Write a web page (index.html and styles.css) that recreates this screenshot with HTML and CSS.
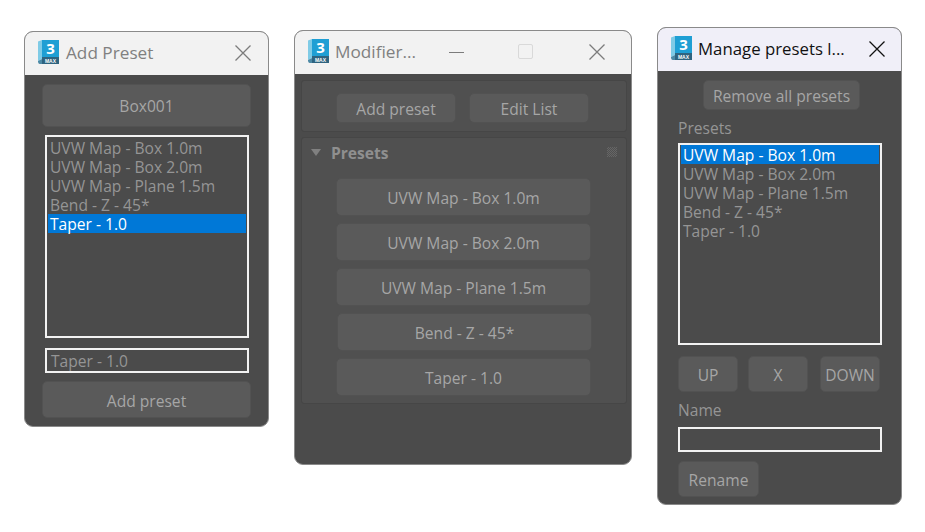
FILE: index.html
```html
<!DOCTYPE html>
<html lang="en">
<head>
<meta charset="utf-8">
<title>Presets</title>
<link rel="stylesheet" href="styles.css">
</head>
<body>
<svg class="defs" width="0" height="0" aria-hidden="true">
  <symbol id="logo" viewBox="0 0 24 26">
    <path d="M2 2.500 6 1v19l-4 2z" fill="#7fcbe6"/>
    <path d="M6 1h17v19H6z" fill="#1f9fd4"/>
    <path d="M6 18h17v7H3l3-3z" fill="#2f6480"/>
    <path d="M2 22l4-2v5H4.500A2.500 2.500 0 0 1 2 22.500z" fill="#4d8aa6"/>
  </symbol>
  <symbol id="close" viewBox="0 0 16 16">
    <path d="M.5.5l15 15M15.500.5l-15 15" fill="none" stroke="currentColor" stroke-width="1.300"/>
  </symbol>
</svg>

<section class="win win-add">
  <header class="bar">
    <span class="logo"><svg width="24" height="26"><use href="#logo"/></svg><b class="l3">3</b><b class="lm">MAX</b></span>
    <span class="title">Add Preset</span>
    <svg class="x" width="16" height="16"><use href="#close"/></svg>
  </header>
  <div class="body add-body">
    <div class="btn btn-box">Box001</div>
    <ul class="list list-add">
      <li>UVW Map - Box 1.0m</li>
      <li>UVW Map - Box 2.0m</li>
      <li>UVW Map - Plane 1.5m</li>
      <li>Bend - Z - 45*</li>
      <li class="sel">Taper - 1.0</li>
    </ul>
    <div class="input input-add">Taper - 1.0</div>
    <div class="btn btn-addp">Add preset</div>
  </div>
</section>

<section class="win win-mod">
  <header class="bar">
    <span class="logo"><svg width="24" height="26"><use href="#logo"/></svg><b class="l3">3</b><b class="lm">MAX</b></span>
    <span class="title title-mod">Modifier...</span>
    <span class="min"></span>
    <span class="max"></span>
    <svg class="x" width="16" height="16"><use href="#close"/></svg>
  </header>
  <div class="body mod-body">
    <div class="group group-top">
      <div class="btn btn-top">Add preset</div>
      <div class="btn btn-top">Edit List</div>
    </div>
    <div class="group group-presets">
      <div class="roll"><span class="tri"></span><span class="roll-name">Presets</span><span class="grip"></span></div>
      <div class="btn btn-p">UVW Map - Box 1.0m</div>
      <div class="btn btn-p">UVW Map - Box 2.0m</div>
      <div class="btn btn-p">UVW Map - Plane 1.5m</div>
      <div class="btn btn-p btn-shift">Bend - Z - 45*</div>
      <div class="btn btn-p">Taper - 1.0</div>
    </div>
  </div>
</section>

<section class="win win-man">
  <header class="bar bar-active">
    <span class="logo"><svg width="24" height="26"><use href="#logo"/></svg><b class="l3">3</b><b class="lm">MAX</b></span>
    <span class="title title-man">Manage presets l...</span>
    <svg class="x" width="16" height="16"><use href="#close"/></svg>
  </header>
  <div class="body man-body">
    <div class="btn btn-remove">Remove all presets</div>
    <div class="label label-p">Presets</div>
    <ul class="list list-man">
      <li class="sel">UVW Map - Box 1.0m</li>
      <li>UVW Map - Box 2.0m</li>
      <li>UVW Map - Plane 1.5m</li>
      <li>Bend - Z - 45*</li>
      <li>Taper - 1.0</li>
    </ul>
    <div class="row3">
      <div class="btn btn-sm">UP</div>
      <div class="btn btn-sm btn-x">X</div>
      <div class="btn btn-sm btn-down">DOWN</div>
    </div>
    <div class="label label-n">Name</div>
    <div class="input input-man"></div>
    <div class="btn btn-rename">Rename</div>
  </div>
</section>
</body>
</html>
```

FILE: styles.css
```css
* { box-sizing: border-box; }
html, body { margin: 0; padding: 0; }
body {
  position: relative;
  width: 925px;
  height: 532px;
  background: #fff;
  font-family: "Open Sans", "Noto Sans", sans-serif;
  overflow: hidden;
}
.defs { position: absolute; }
.win {
  position: absolute;
  display: flex;
  flex-direction: column;
  border: 1px solid #8a8a8a;
  border-radius: 9px;
  overflow: hidden;
  background: #4b4b4b;
}
.win-add { left: 24px; top: 31px; width: 245px; height: 396px; }
.win-mod { left: 294px; top: 30px; width: 338px; height: 435px; }
.win-man { left: 657px; top: 27px; width: 245px; height: 478px; }

.bar {
  position: relative;
  flex: none;
  height: 43px;
  display: flex;
  align-items: center;
  padding-left: 11px;
  background: #f2f2f2;
  color: #808080;
}
.bar-active { background: #f0eff8; color: #111; }
.logo { position: relative; width: 24px; height: 26px; flex: none; margin-top: -4px; }
.logo svg { display: block; }
.l3 {
  position: absolute; left: 6px; right: 1px; top: 1px;
  text-align: center; color: #fff;
  font: 700 15px/17px "Open Sans", sans-serif;
}
.lm {
  position: absolute; left: 6px; right: 1px; top: 19px;
  text-align: center; color: #fff;
  font: 700 5px/6px "Liberation Sans", sans-serif;
}
.title { margin: -2px 0 0 6px; font-size: 17.200px; line-height: 24px; white-space: nowrap; }
.title-mod { margin-left: 5px; }
.title-man { margin-left: 5px; font-size: 16.800px; }
.x { position: absolute; right: 17px; top: 13px; color: #7c7c7c; }
.bar-active .x { color: #111; right: 16px; }
.win-mod .x { right: 26px; }
.min { position: absolute; left: 154px; top: 21px; width: 15px; height: 1px; background: #7c7c7c; }
.max { position: absolute; left: 223px; top: 13px; width: 15px; height: 15px; border: 1px solid #d9d9d9; border-radius: 2px; }

.body { flex: 1; display: flex; flex-direction: column; }

.btn {
  flex: none;
  display: flex;
  align-items: center;
  justify-content: center;
  padding-top: 2px;
  background: #5a5a5a;
  border: 1px solid #525252;
  border-radius: 5px;
  color: #a6a6a6;
  font-size: 15.600px;
  white-space: nowrap;
}
.list {
  flex: none;
  list-style: none;
  margin: 0;
  padding: 1px 1px 2px;
  border: 2px solid #f2f2f2;
  background: #4b4b4b;
  color: #959595;
  font-size: 15.600px;
}
.list li { padding: 2px 0 0 2px; height: 19px; line-height: 17px; white-space: nowrap; }
.list .sel { background: #0078d7; color: #fff; }
.input {
  flex: none;
  border: 2px solid #f2f2f2;
  padding: 2px 0 0 4px;
  color: #959595;
  font-size: 15.600px;
  line-height: 19px;
}
.label { flex: none; color: #959595; font-size: 15.600px; line-height: 20px; }

/* Add preset window */
.add-body { padding: 9px 17px 0; }
.btn-box { width: 209px; height: 43px; padding-top: 1px; }
.list-add { width: 204px; height: 203px; margin: 8px 0 0 3px; }
.input-add { width: 204px; height: 25px; margin: 10px 0 0 3px; }
.btn-addp { width: 209px; height: 37px; margin-top: 8px; }

/* Modifier window */
.mod-body { padding: 6px 4px 0 6px; }
.group {
  flex: none;
  background: #505050;
  border: 1px solid #464646;
  border-radius: 3px;
}
.group-top {
  height: 52px;
  display: flex;
  gap: 13px;
  padding: 12px 0 0 34px;
}
.btn-top { width: 120px; height: 30px; }
.group-presets {
  height: 267px;
  margin-top: 5px;
  display: flex;
  flex-direction: column;
  gap: 7px;
  padding: 0 0 0 34px;
}
.roll {
  position: relative;
  flex: none;
  height: 33px;
  margin: 0 0 0 -34px;
  color: #8f8f8f;
  font-size: 15.600px;
  font-weight: 700;
  line-height: 30px;
  padding-left: 29px;
}
.tri {
  position: absolute; left: 9px; top: 11px; width: 0; height: 0;
  border-left: 5px solid transparent;
  border-right: 5px solid transparent;
  border-top: 7px solid #808080;
}
.grip {
  position: absolute; right: 9px; top: 9px; width: 10px; height: 10px;
  background: repeating-conic-gradient(#666 0 25%, #505050 0 50%) 0 0 / 2px 2px;
}
.btn-p { width: 255px; height: 38px; }
.btn-shift { margin-left: 1px; }

/* Manage window */
.man-body { padding: 9px 20px 0; }
.btn-remove { width: 157px; height: 30px; margin-left: 25px; }
.label-p { margin-top: 8px; height: 20px; }
.list-man { width: 204px; height: 202px; margin-top: 5px; padding-top: 0; }
.row3 { flex: none; display: flex; margin-top: 11px; }
.btn-sm { width: 60px; height: 36px; }
.btn-x { margin-left: 10px; }
.btn-down { margin-left: 12px; }
.label-n { margin-top: 8px; }
.input-man { width: 204px; height: 25px; margin-top: 7px; }
.btn-rename { width: 81px; height: 36px; margin-top: 9px; }
```
